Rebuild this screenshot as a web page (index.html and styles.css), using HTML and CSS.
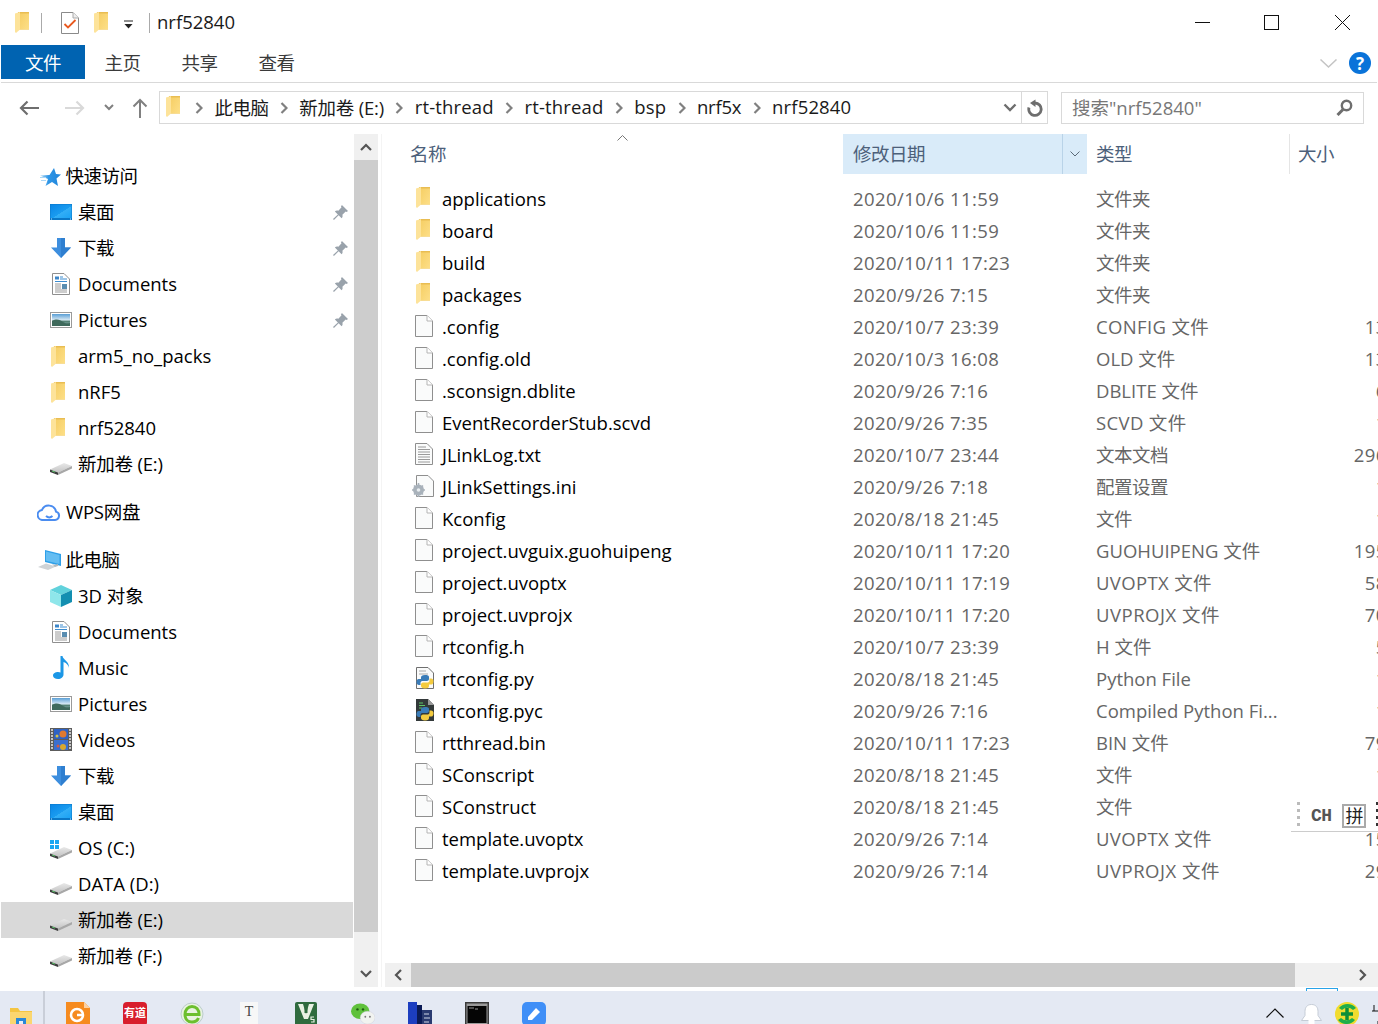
FILE: index.html
```html
<!DOCTYPE html>
<html lang="zh-CN">
<head>
<meta charset="utf-8">
<title>nrf52840</title>
<link rel="stylesheet" href="styles.css">
</head>
<body>
<svg class="defs" width="0" height="0" aria-hidden="true">
  <defs>
    <linearGradient id="g-folder" x1="0" y1="0" x2="1" y2="1"><stop offset="0" stop-color="#f6cf66"/><stop offset="1" stop-color="#fddf88"/></linearGradient>
    <linearGradient id="g-desk" x1="0" y1="0" x2="1" y2="1"><stop offset="0" stop-color="#0a86e6"/><stop offset=".55" stop-color="#1a9cf0"/><stop offset=".56" stop-color="#33aef6"/><stop offset="1" stop-color="#1aa2f4"/></linearGradient>
    <linearGradient id="g-pic" x1="0" y1="0" x2="0" y2="1"><stop offset="0" stop-color="#5a9fd6"/><stop offset=".5" stop-color="#d8e9f4"/><stop offset=".6" stop-color="#4e7d6e"/><stop offset="1" stop-color="#a9c8d0"/></linearGradient>
    <linearGradient id="g-drive" x1="0" y1="0" x2="0" y2="1"><stop offset="0" stop-color="#e8e8e8"/><stop offset="1" stop-color="#c4c4c4"/></linearGradient>
    <linearGradient id="g-star" x1="0" y1="0" x2="1" y2="0"><stop offset="0" stop-color="#b4dcf8"/><stop offset=".4" stop-color="#2f96e6"/><stop offset="1" stop-color="#1f84da"/></linearGradient>

    <symbol id="i-folder" viewBox="0 0 14 21">
      <rect x="3" y="0" width="11" height="17.500" fill="#e9bd52"/>
      <path d="M5 1.500h9v16H5z" fill="url(#g-folder)"/>
      <path d="M0 1.500 5 0v17.500L1 21l-1-1z" fill="#fde39a"/>
    </symbol>
    <symbol id="i-file" viewBox="0 0 18 22">
      <path d="M.5.5h11.500l5.500 5.500v15.500H.5z" fill="#fafbfb" stroke="#8f8f8f"/>
      <path d="M12 .5V6h5.500" fill="#fff" stroke="#b5b5b5"/>
    </symbol>
    <symbol id="i-txt" viewBox="0 0 18 22">
      <path d="M.5.5h11.500l5.500 5.500v15.500H.5z" fill="#fafbfb" stroke="#8f8f8f"/>
      <path d="M3 4h8M3 6.500h12M3 9h12M3 11.500h12M3 14h12M3 16.500h12M3 19h12" stroke="#9a9a9a"/>
    </symbol>
    <symbol id="i-ini" viewBox="0 0 22 22">
      <path d="M4.500.5h11.500l5.500 5.500v15.500h-17z" fill="#fafbfb" stroke="#8f8f8f"/>
      <circle cx="6.500" cy="15" r="5.500" fill="#a9b2bb"/>
      <path d="M6.500 8v14M0 15h13M2 10.500l9 9M11 10.500l-9 9" stroke="#a9b2bb" stroke-width="1.600"/>
      <circle cx="6.500" cy="15" r="1.800" fill="#e8edf0"/>
    </symbol>
    <symbol id="i-py" viewBox="0 0 18 22">
      <path d="M.5.5h11.500l5.500 5.500v15.500H.5z" fill="#fafbfb" stroke="#6f6f6f"/>
      <path d="M3 4h7M3 7h9" stroke="#aaa"/>
      <path d="M9 8c-3 0-4 1-4 2.500V12H2.500C1 12 .5 14 .5 15.500S1.500 18 3 18h1.500v-2c0-1.500 1-2 2.500-2h4c1 0 2-.8 2-2V10c0-1.500-1.500-2-4-2z" fill="#3a7cb8"/>
      <path d="M9 21.500c3 0 4-1 4-2.500v-1.500h2.500c1.500 0 2-2 2-3.500s-1-2.500-2.500-2.500h-1.500v2c0 1.500-1 2-2.500 2H7c-1 0-2 .8-2 2V19c0 1.500 1.500 2.500 4 2.500z" fill="#f4cb3f"/>
    </symbol>
    <symbol id="i-pyc" viewBox="0 0 18 22">
      <path d="M0 0h12l6 6v16H0z" fill="#33393a"/>
      <path d="M12 0v6h6" fill="#9a9a9a"/>
      <path d="M3 4h4M3 6.500h6M3 9h3" stroke="#5fc46a"/>
      <path d="M9 8c-3 0-4 1-4 2.500V12H2.500C1 12 .5 14 .5 15.500S1.500 18 3 18h1.500v-2c0-1.500 1-2 2.500-2h4c1 0 2-.8 2-2V10c0-1.500-1.500-2-4-2z" fill="#3a7cb8"/>
      <path d="M9 21.500c3 0 4-1 4-2.500v-1.500h2.500c1.500 0 2-2 2-3.500s-1-2.500-2.500-2.500h-1.500v2c0 1.500-1 2-2.500 2H7c-1 0-2 .8-2 2V19c0 1.500 1.500 2.500 4 2.500z" fill="#f4cb3f"/>
    </symbol>
    <symbol id="i-desk" viewBox="0 0 22 16">
      <rect width="22" height="16" fill="#0a78c8"/>
      <rect x=".5" y=".5" width="21" height="13.500" fill="url(#g-desk)"/>
      <path d="M1 15h1M20 15h1" stroke="#bfe3fa"/>
    </symbol>
    <symbol id="i-down" viewBox="0 0 20 20">
      <path d="M6 0h8v9.500h6L10 20 0 9.500h6z" fill="#3d8ede"/>
      <path d="M10 0h4v9.500h6L10 20z" fill="#2f7fd0"/>
    </symbol>
    <symbol id="i-doc" viewBox="0 0 18 22">
      <path d="M.5.5h11.500l5.500 5.500v15.500H.5z" fill="#fff" stroke="#8f8f8f"/>
      <path d="M3 3.500h4v3H3z" fill="#3c86c9"/>
      <path d="M8 4h3M8 6h7M3 8.500h12" stroke="#3c8ccf"/>
      <path d="M3 11h6M3 13h6M3 15h6M3 17h12M3 19h12" stroke="#9a9a9a"/>
      <rect x="10" y="11" width="5" height="5" fill="#5a8db0"/>
    </symbol>
    <symbol id="i-pic" viewBox="0 0 22 16">
      <rect x=".5" y=".5" width="21" height="15" fill="#fff" stroke="#9a9a9a"/>
      <rect x="2" y="2" width="18" height="12" fill="url(#g-pic)"/>
      <path d="M2 9c5-3 8-1 11 1s5 1 7 1v3H2z" fill="#3f6a5c"/>
    </symbol>
    <symbol id="i-drive" viewBox="0 0 22 12">
      <path d="M0 6.500 14 0l8 3L8 9.500z" fill="url(#g-drive)"/>
      <path d="M0 6.500 8 9.500V12L0 9z" fill="#3d3d3d"/>
      <path d="M8 9.500 22 3v2.500L8 12z" fill="#a8a8a8"/>
      <path d="M2 8l3 1.100" stroke="#58c268"/>
    </symbol>
    <symbol id="i-star" viewBox="0 0 21 18">
      <path d="M14 0l2 6 5 .5-4.500 4 1.500 7.500-6-4-6.500 4 2.500-7-8-3.500 9.500-.5z" fill="url(#g-star)"/>
      <path d="M0 9.500h6M1 12.500h5" stroke="#a9d6f6"/>
    </symbol>
    <symbol id="i-cloud" viewBox="0 0 24 18">
      <path d="M6.500 17h11.500a4.300 4.300 0 0 0 1-8.400 7.400 7.400 0 0 0-14-1.700A5.100 5.100 0 0 0 6.500 17z" fill="none" stroke="#4a8cf0" stroke-width="2"/>
      <path d="M9 13c2 1.800 4.500 1.800 6.500 0" fill="none" stroke="#4a8cf0" stroke-width="2"/>
    </symbol>
    <symbol id="i-pc" viewBox="0 0 24 21">
      <path d="M7 0l16 4v12L7 12z" fill="#2e9fe8"/>
      <path d="M8 1.500l13.500 3.400v9L8 10.700z" fill="#64bdf2"/>
      <path d="M0 17l8-3.500 10 3L10 20z" fill="#cfd3d6"/>
      <path d="M14 14l3 1 3-1v2l-3 1z" fill="#b5b9bc"/>
    </symbol>
    <symbol id="i-3d" viewBox="0 0 22 22">
      <path d="M11 0l11 5-11 5L0 5z" fill="#61d2dc"/>
      <path d="M0 5l11 5v12L0 17z" fill="#8fe6ea"/>
      <path d="M22 5 11 10v12l11-5z" fill="#138fb1"/>
    </symbol>
    <symbol id="i-music" viewBox="0 0 17 23">
      <path d="M7.500 0h2c.5 4 7 5 6.500 12-.3-2-2-5-5.500-6v12.500c0 2.700-2.500 4.500-5.500 4.500S0 21.500 0 19.500 2.500 16 5 16c1 0 2 .2 2.500.6z" fill="#1c97e6"/>
    </symbol>
    <symbol id="i-video" viewBox="0 0 22 23">
      <rect width="22" height="23" fill="#5c5c5c"/>
      <path d="M1 2h2M1 5h2M1 8h2M1 11h2M1 14h2M1 17h2M1 20h2M19 2h2M19 5h2M19 8h2M19 11h2M19 14h2M19 17h2M19 20h2" stroke="#e8e8e8" stroke-width="1.300"/>
      <rect x="4" y="1" width="14" height="10" fill="#2e62c4"/>
      <rect x="4" y="12" width="14" height="10" fill="#3a6fd0"/>
      <circle cx="13" cy="6" r="3.500" fill="#e0792e"/><circle cx="7" cy="8" r="1.500" fill="#d6c446"/>
      <circle cx="13" cy="19" r="3" fill="#d9a82e"/><circle cx="8" cy="18" r="1.500" fill="#d65a3e"/>
    </symbol>
    <symbol id="i-pin" viewBox="0 0 16 16">
      <path d="M9.500 0 16 6.500l-1.500 1-1-.6L10 10.300c.5 1.500.2 2.700-.8 3.700L6 10.800 1 16l-1-1 5.200-5L2 6.800c1-1 2.200-1.300 3.700-.8L9.100 2.500l-.6-1z" fill="#99a2ab"/>
    </symbol>
    <symbol id="i-chev" viewBox="0 0 8 12">
      <path d="M1.500 1 6.500 6l-5 5" fill="none" stroke="#808080" stroke-width="2.200"/>
    </symbol>
  </defs>
</svg>

<div class="window">
  <header class="titlebar">
    <svg class="ic-folder qa-first"><use href="#i-folder"/></svg>
    <span class="qa-sep"></span>
    <svg class="qa-check" viewBox="0 0 18 22">
      <path d="M.5.5h11.500l5.500 5.500v15.500H.5z" fill="#fff" stroke="#8a8a8a"/>
      <path d="M12 .5V6h5.500" fill="#eee" stroke="#aaa"/>
      <path d="M3.500 12l3.500 3.500 7.500-7.500" fill="none" stroke="#e8591f" stroke-width="1.800"/>
    </svg>
    <svg class="ic-folder qa-folder2"><use href="#i-folder"/></svg>
    <svg class="qa-drop" viewBox="0 0 11 10"><path d="M1 1h9" stroke="#222"/><path d="M1.500 4h8L5.500 8.500z" fill="#222"/></svg>
    <span class="qa-sep sep2"></span>
    <span class="title-text">nrf52840</span>
    <div class="winbtns">
      <svg class="winbtn" viewBox="0 0 15 15"><path d="M0 7.500h15" stroke="#111"/></svg>
      <svg class="winbtn" viewBox="0 0 15 15"><rect x=".5" y=".5" width="14" height="14" fill="none" stroke="#111"/></svg>
      <svg class="winbtn win-close" viewBox="0 0 15 15"><path d="M0 0l15 15M15 0 0 15" stroke="#111"/></svg>
    </div>
  </header>

  <nav class="ribbon">
    <span class="tab tab-file cjk">文件</span>
    <span class="tab tab-first cjk">主页</span>
    <span class="tab cjk">共享</span>
    <span class="tab cjk">查看</span>
    <svg class="rib-chev" viewBox="0 0 17 9"><path d="M.5.5 8.500 8l8-7.500" fill="none" stroke="#c4c4c4" stroke-width="1.500"/></svg>
    <span class="help">?</span>
  </nav>

  <div class="navbar">
    <svg class="nav-arrow back" viewBox="0 0 20 16"><path d="M20 8H2M8.500 1.500 2 8l6.500 6.500" fill="none" stroke="#6e6e6e" stroke-width="2.200"/></svg>
    <svg class="nav-arrow fwd" viewBox="0 0 20 16"><path d="M0 8h18M11.500 1.500 18 8l-6.500 6.500" fill="none" stroke="#d9d9d9" stroke-width="2.200"/></svg>
    <svg class="nav-mini" viewBox="0 0 10 7"><path d="M1 1l4 4 4-4" fill="none" stroke="#808080" stroke-width="2"/></svg>
    <svg class="nav-up" viewBox="0 0 16 20"><path d="M8 20V2M1.500 8.500 8 2l6.500 6.500" fill="none" stroke="#808080" stroke-width="2"/></svg>
    <div class="address">
      <svg class="ic-folder addr-folder"><use href="#i-folder"/></svg>
      <div class="crumbs">
        <svg class="crumb-sep"><use href="#i-chev"/></svg><span class="cjk">此电脑</span>
        <svg class="crumb-sep"><use href="#i-chev"/></svg><span class="mix">新加卷 (E:)</span>
        <svg class="crumb-sep"><use href="#i-chev"/></svg><span>rt-thread</span>
        <svg class="crumb-sep"><use href="#i-chev"/></svg><span>rt-thread</span>
        <svg class="crumb-sep"><use href="#i-chev"/></svg><span>bsp</span>
        <svg class="crumb-sep"><use href="#i-chev"/></svg><span class="mix">nrf5x</span>
        <svg class="crumb-sep"><use href="#i-chev"/></svg><span>nrf52840</span>
      </div>
      <svg class="addr-drop" viewBox="0 0 14 9"><path d="M1.500 1.500 7 7l5.500-5.500" fill="none" stroke="#6e6e6e" stroke-width="2.400"/></svg>
      <div class="addr-refresh">
        <svg class="refresh" viewBox="0 0 17 18"><path d="M9 4a6.200 6.200 0 1 1-6 4.500" fill="none" stroke="#6e6e6e" stroke-width="2.800"/><path d="M9.500 .5v7.500L4 4z" fill="#6e6e6e"/></svg>
      </div>
    </div>
    <div class="search">
      <span class="search-text">搜索"nrf52840"</span>
      <svg class="search-ic" viewBox="0 0 17 17"><circle cx="10.500" cy="6.500" r="4.700" fill="none" stroke="#6e6e6e" stroke-width="2.400"/><path d="M7 10.500 1.500 16" stroke="#6e6e6e" stroke-width="3"/></svg>
    </div>
  </div>

  <main class="content">
    <aside class="tree">
      <section class="tree-group">
        <div class="node lvl1"><svg class="ic ic-star"><use href="#i-star"/></svg><span class="cjk">快速访问</span></div>
        <div class="node"><svg class="ic ic-desk"><use href="#i-desk"/></svg><span class="cjk">桌面</span><svg class="pin"><use href="#i-pin"/></svg></div>
        <div class="node"><svg class="ic ic-down"><use href="#i-down"/></svg><span class="cjk">下载</span><svg class="pin"><use href="#i-pin"/></svg></div>
        <div class="node"><svg class="ic ic-doc"><use href="#i-doc"/></svg><span>Documents</span><svg class="pin"><use href="#i-pin"/></svg></div>
        <div class="node"><svg class="ic ic-pic"><use href="#i-pic"/></svg><span>Pictures</span><svg class="pin"><use href="#i-pin"/></svg></div>
        <div class="node"><svg class="ic ic-folder"><use href="#i-folder"/></svg><span>arm5_no_packs</span></div>
        <div class="node"><svg class="ic ic-folder"><use href="#i-folder"/></svg><span>nRF5</span></div>
        <div class="node"><svg class="ic ic-folder"><use href="#i-folder"/></svg><span>nrf52840</span></div>
        <div class="node"><svg class="ic ic-drive"><use href="#i-drive"/></svg><span class="mix">新加卷 (E:)</span></div>
      </section>
      <section class="tree-group">
        <div class="node lvl1"><svg class="ic ic-cloud"><use href="#i-cloud"/></svg><span class="mix">WPS网盘</span></div>
      </section>
      <section class="tree-group">
        <div class="node lvl1"><svg class="ic ic-pc"><use href="#i-pc"/></svg><span class="cjk">此电脑</span></div>
        <div class="node"><svg class="ic ic-3d"><use href="#i-3d"/></svg><span>3D 对象</span></div>
        <div class="node"><svg class="ic ic-doc"><use href="#i-doc"/></svg><span>Documents</span></div>
        <div class="node"><svg class="ic ic-music"><use href="#i-music"/></svg><span>Music</span></div>
        <div class="node"><svg class="ic ic-pic"><use href="#i-pic"/></svg><span>Pictures</span></div>
        <div class="node"><svg class="ic ic-video"><use href="#i-video"/></svg><span>Videos</span></div>
        <div class="node"><svg class="ic ic-down"><use href="#i-down"/></svg><span class="cjk">下载</span></div>
        <div class="node"><svg class="ic ic-desk"><use href="#i-desk"/></svg><span class="cjk">桌面</span></div>
        <div class="node"><svg class="ic ic-drive os"><use href="#i-drive"/></svg><i class="win-logo"></i><span>OS (C:)</span></div>
        <div class="node"><svg class="ic ic-drive"><use href="#i-drive"/></svg><span>DATA (D:)</span></div>
        <div class="node selected"><svg class="ic ic-drive"><use href="#i-drive"/></svg><span class="mix">新加卷 (E:)</span></div>
        <div class="node"><svg class="ic ic-drive"><use href="#i-drive"/></svg><span class="mix">新加卷 (F:)</span></div>
      </section>
    </aside>

    <div class="vscroll">
      <button class="sb-btn"><svg viewBox="0 0 12 8"><path d="M1 7l5-5 5 5" fill="none" stroke="#555" stroke-width="2.200"/></svg></button>
      <div class="vtrack"><div class="vthumb"></div></div>
      <button class="sb-btn"><svg viewBox="0 0 12 8"><path d="M1 1l5 5 5-5" fill="none" stroke="#555" stroke-width="2.200"/></svg></button>
    </div>

    <section class="files">
      <div class="fhead">
        <div class="hcell hname"><span class="cjk">名称</span><svg class="sort" viewBox="0 0 11 6"><path d="M.5 5.500 5.500.5l5 5" fill="none" stroke="#777"/></svg></div>
        <div class="hcell hdate"><span class="cjk">修改日期</span><span class="hdrop"><svg viewBox="0 0 10 6"><path d="M.5.500 5 5 9.500.5" fill="none" stroke="#5a6a78"/></svg></span></div>
        <div class="hcell htype"><span class="cjk">类型</span></div>
        <div class="hcell hsize"><span class="cjk">大小</span></div>
      </div>
      <div class="flist">
        <div class="frow"><span class="fname"><svg class="fic f-folder"><use href="#i-folder"/></svg>applications</span><span class="fdate">2020/10/6 11:59</span><span class="ftype cjk">文件夹</span><span class="fsize"></span></div>
        <div class="frow"><span class="fname"><svg class="fic f-folder"><use href="#i-folder"/></svg>board</span><span class="fdate">2020/10/6 11:59</span><span class="ftype cjk">文件夹</span><span class="fsize"></span></div>
        <div class="frow"><span class="fname"><svg class="fic f-folder"><use href="#i-folder"/></svg>build</span><span class="fdate">2020/10/11 17:23</span><span class="ftype cjk">文件夹</span><span class="fsize"></span></div>
        <div class="frow"><span class="fname"><svg class="fic f-folder"><use href="#i-folder"/></svg>packages</span><span class="fdate">2020/9/26 7:15</span><span class="ftype cjk">文件夹</span><span class="fsize"></span></div>
        <div class="frow"><span class="fname"><svg class="fic"><use href="#i-file"/></svg>.config</span><span class="fdate">2020/10/7 23:39</span><span class="ftype lat">CONFIG 文件</span><span class="fsize">13 KB</span></div>
        <div class="frow"><span class="fname"><svg class="fic"><use href="#i-file"/></svg>.config.old</span><span class="fdate">2020/10/3 16:08</span><span class="ftype">OLD 文件</span><span class="fsize">13 KB</span></div>
        <div class="frow"><span class="fname"><svg class="fic"><use href="#i-file"/></svg>.sconsign.dblite</span><span class="fdate">2020/9/26 7:16</span><span class="ftype">DBLITE 文件</span><span class="fsize">6 KB</span></div>
        <div class="frow"><span class="fname"><svg class="fic"><use href="#i-file"/></svg>EventRecorderStub.scvd</span><span class="fdate">2020/9/26 7:35</span><span class="ftype lat">SCVD 文件</span><span class="fsize">1 KB</span></div>
        <div class="frow"><span class="fname"><svg class="fic"><use href="#i-txt"/></svg>JLinkLog.txt</span><span class="fdate">2020/10/7 23:44</span><span class="ftype cjk">文本文档</span><span class="fsize">296 KB</span></div>
        <div class="frow"><span class="fname"><svg class="fic f-ini"><use href="#i-ini"/></svg>JLinkSettings.ini</span><span class="fdate">2020/9/26 7:18</span><span class="ftype cjk">配置设置</span><span class="fsize">1 KB</span></div>
        <div class="frow"><span class="fname"><svg class="fic"><use href="#i-file"/></svg>Kconfig</span><span class="fdate">2020/8/18 21:45</span><span class="ftype cjk">文件</span><span class="fsize">1 KB</span></div>
        <div class="frow"><span class="fname"><svg class="fic"><use href="#i-file"/></svg>project.uvguix.guohuipeng</span><span class="fdate">2020/10/11 17:20</span><span class="ftype">GUOHUIPENG 文件</span><span class="fsize">195 KB</span></div>
        <div class="frow"><span class="fname"><svg class="fic"><use href="#i-file"/></svg>project.uvoptx</span><span class="fdate">2020/10/11 17:19</span><span class="ftype lat">UVOPTX 文件</span><span class="fsize">58 KB</span></div>
        <div class="frow"><span class="fname"><svg class="fic"><use href="#i-file"/></svg>project.uvprojx</span><span class="fdate">2020/10/11 17:20</span><span class="ftype lat2">UVPROJX 文件</span><span class="fsize">70 KB</span></div>
        <div class="frow"><span class="fname"><svg class="fic"><use href="#i-file"/></svg>rtconfig.h</span><span class="fdate">2020/10/7 23:39</span><span class="ftype">H 文件</span><span class="fsize">5 KB</span></div>
        <div class="frow"><span class="fname"><svg class="fic f-py"><use href="#i-py"/></svg>rtconfig.py</span><span class="fdate">2020/8/18 21:45</span><span class="ftype">Python File</span><span class="fsize">1 KB</span></div>
        <div class="frow"><span class="fname"><svg class="fic f-py"><use href="#i-pyc"/></svg>rtconfig.pyc</span><span class="fdate">2020/9/26 7:16</span><span class="ftype">Compiled Python Fi...</span><span class="fsize">1 KB</span></div>
        <div class="frow"><span class="fname"><svg class="fic"><use href="#i-file"/></svg>rtthread.bin</span><span class="fdate">2020/10/11 17:23</span><span class="ftype">BIN 文件</span><span class="fsize">79 KB</span></div>
        <div class="frow"><span class="fname"><svg class="fic"><use href="#i-file"/></svg>SConscript</span><span class="fdate">2020/8/18 21:45</span><span class="ftype cjk">文件</span><span class="fsize">1 KB</span></div>
        <div class="frow"><span class="fname"><svg class="fic"><use href="#i-file"/></svg>SConstruct</span><span class="fdate">2020/8/18 21:45</span><span class="ftype cjk">文件</span><span class="fsize">2 KB</span></div>
        <div class="frow"><span class="fname"><svg class="fic"><use href="#i-file"/></svg>template.uvoptx</span><span class="fdate">2020/9/26 7:14</span><span class="ftype lat">UVOPTX 文件</span><span class="fsize">15 KB</span></div>
        <div class="frow"><span class="fname"><svg class="fic"><use href="#i-file"/></svg>template.uvprojx</span><span class="fdate">2020/9/26 7:14</span><span class="ftype lat2">UVPROJX 文件</span><span class="fsize">29 KB</span></div>
      </div>
      <div class="hscroll">
        <button class="hb-btn"><svg viewBox="0 0 8 12"><path d="M7 1 2 6l5 5" fill="none" stroke="#555" stroke-width="2.200"/></svg></button>
        <div class="hthumb"></div>
        <button class="hb-btn"><svg viewBox="0 0 8 12"><path d="M1 1l5 5-5 5" fill="none" stroke="#555" stroke-width="2.200"/></svg></button>
      </div>
    </section>
  </main>

  <footer class="taskbar">
    <svg class="tk tk-explorer" viewBox="0 0 22 22"><path d="M0 3h8l2 3h12v16H0z" fill="#f4c542"/><rect y="7" width="22" height="15" fill="#fad670"/><rect x="6" y="13" width="10" height="9" fill="#2a88d8"/><rect x="9" y="16" width="4" height="6" fill="#e8eef5"/></svg>
    <span class="tk-sep"></span>
    <svg class="tk tk-foxit" viewBox="0 0 24 24"><path d="M0 0h18l6 6v18H0z" fill="#f68b1f"/><path d="M18 0v6h6" fill="#fcd0a0"/><circle cx="11" cy="13" r="6" fill="none" stroke="#fff" stroke-width="2.500"/><path d="M11 13h6" stroke="#fff" stroke-width="2.500"/></svg>
    <span class="tk tk-youdao">有道</span>
    <svg class="tk tk-ie" viewBox="0 0 24 24"><circle cx="12" cy="12" r="11" fill="#e8f3e0" stroke="#bcc" stroke-width="1"/><path d="M5 12.500h14c0-5-3-8-7-8s-7 3.500-7 8 3 7.500 7 7.500c3 0 5.500-1.500 6.500-4" fill="none" stroke="#6cbf2e" stroke-width="3"/></svg>
    <span class="tk tk-t">T</span>
    <svg class="tk tk-vs" viewBox="0 0 22 24"><rect width="22" height="24" rx="2" fill="#2f6b3e"/><path d="M3 2h5l3 10 3-10h5l-6 15h-4z" fill="#e9f1e3"/><path d="M9.500 2h3v9h-3z" fill="#2f6b3e"/><path d="M19 15h-3v2.500h3V20h-3" fill="none" stroke="#e9f1e3" stroke-width="1.200"/></svg>
    <svg class="tk tk-wx" viewBox="0 0 26 24"><ellipse cx="10" cy="9" rx="10" ry="8.500" fill="#5fc13c"/><ellipse cx="18" cy="16" rx="8" ry="7" fill="#f1f3f0" stroke="#ccd" stroke-width=".5"/><circle cx="7" cy="7" r="1.300" fill="#1d5c10"/><circle cx="13" cy="7" r="1.300" fill="#1d5c10"/><circle cx="15.500" cy="15" r="1" fill="#777"/><circle cx="20.500" cy="15" r="1" fill="#777"/></svg>
    <svg class="tk tk-keil" viewBox="0 0 24 24"><rect width="9" height="24" fill="#1c3ec0"/><rect x="9" y="3" width="5" height="21" fill="#0a1a55"/><rect x="14" y="8" width="10" height="16" fill="#2a3a70"/><path d="M16 12h5M16 16h6M16 20h5" stroke="#cfd6e6"/></svg>
    <svg class="tk tk-cmd" viewBox="0 0 24 24"><rect width="24" height="24" fill="#3a3a3a"/><rect x="1.500" y="1.500" width="21" height="21" fill="#9a9a9a"/><rect x="2.500" y="4" width="19" height="17" fill="#050505"/><path d="M4 6h5M10 7h3" stroke="#999"/></svg>
    <svg class="tk tk-note" viewBox="0 0 24 24"><rect width="24" height="24" rx="5" fill="#3f8ff7"/><path d="M6 15 14 6l4 4-8 8H6z" fill="#fff"/></svg>
    <span class="tk-gap"></span>
    <svg class="tray-up" viewBox="0 0 18 10"><path d="M.5 9.500 9 1l8.500 8.500" fill="none" stroke="#111" stroke-width="1.200"/></svg>
    <svg class="tray-bell" viewBox="0 0 21 20"><path d="M10.500 .5c4.500 0 6.500 3 6.500 7v4l3.500 5H.5L4 11.500v-4c0-4 2-7 6.500-7z" fill="#fff" stroke="#c5ccd6"/><rect x="7.500" y="16" width="6" height="4" fill="#fff"/></svg>
    <svg class="tray-plus" viewBox="0 0 24 24"><circle cx="12" cy="12" r="12" fill="#f1dc2f"/><path d="M4 6a11 11 0 0 1 17 0l-3 2a8 8 0 0 0-11 0zM20 18a11 11 0 0 1-17 0l3-2a8 8 0 0 0 11 0z" fill="#1fae4b"/><path d="M12 6v12M6 12h12" stroke="#0f8e38" stroke-width="3.500"/></svg>
    <svg class="tray-plug" viewBox="0 0 10 22"><path d="M2 0v6M8 0v6M0 6h10v6a4 4 0 0 1-4 4v6" fill="none" stroke="#111"/></svg>
  </footer>
</div>

<div class="ime">
  <span class="ime-grip"></span>
  <span class="ime-ch">CH</span>
  <span class="ime-py">拼</span>
  <span class="ime-grip end"></span>
</div>
<span class="active-tab"></span>
</body>
</html>
```

FILE: styles.css
```css
* { box-sizing: border-box; }
html, body { margin: 0; padding: 0; }
body {
  width: 1378px;
  height: 1024px;
  overflow: hidden;
  position: relative;
  background: #fff;
  color: #000;
  font-family: "Open Sans", "Noto Sans CJK SC", sans-serif;
  font-size: 18.5px;
}
.defs { position: absolute; }
.window { display: flex; flex-direction: column; width: 1378px; height: 1024px; overflow: hidden; }
svg { display: block; flex: none; }
.cjk { letter-spacing: -.5px; }
.mix { letter-spacing: -.2px; }
.lat { letter-spacing: .35px; }
.lat2 { letter-spacing: .5px; }

/* title bar */
.titlebar { display: flex; align-items: center; height: 45px; flex: none; }
.ic-folder { width: 14px; height: 21px; }
.qa-first { margin-left: 15px; }
.qa-sep { width: 1px; height: 20px; background: #aaa; margin-left: 12px; }
.sep2 { margin-left: 15px; }
.qa-check { width: 18px; height: 22px; margin-left: 19px; }
.qa-folder2 { margin-left: 15px; }
.qa-drop { width: 11px; height: 10px; margin-left: 15px; margin-top: 5px; }
.title-text { margin: -2px 0 0 7px; color: #1a1a1a; }
.winbtns { display: flex; margin-left: auto; gap: 54px; padding-right: 28px; }
.winbtn { width: 15px; height: 15px; }
.win-close { margin-left: 2px; }

/* ribbon */
.ribbon { display: flex; align-items: stretch; height: 38px; flex: none; margin: 0 1px; border-bottom: 1px solid #d9d9d9; padding-bottom: 3px; }
.tab { width: 77px; display: flex; align-items: center; justify-content: center; color: #3a3a3a; }
.tab-file { width: 84px; background: #0063b1; color: #fff; }
.tab-first { margin-left: -1px; }
.rib-chev { width: 17px; height: 9px; align-self: center; margin: 2px 12px 0 auto; }
.help { width: 22px; height: 22px; border-radius: 50%; background: #0a73d9; color: #fff; align-self: center; display: flex; align-items: center; justify-content: center; font-size: 17px; font-weight: 700; margin: 2px 6px 0 0; }

/* nav bar */
.navbar { display: flex; align-items: center; height: 33px; margin-top: 8px; flex: none; }
.nav-arrow { width: 20px; height: 16px; }
.back { margin-left: 19px; }
.fwd { margin-left: 26px; }
.nav-mini { width: 10px; height: 7px; margin-left: 19px; }
.nav-up { width: 16px; height: 20px; margin-left: 18px; }
.address { display: flex; align-items: center; width: 889px; height: 33px; margin-left: 11px; border: 1px solid #d9d9d9; }
.addr-folder { margin-left: 6px; margin-top: -3px; }
.crumbs { display: flex; align-items: center; color: #1a1a1a; letter-spacing: .15px; margin-top: -2px; }
.crumb-sep { width: 8px; height: 12px; margin: 2px 11.4px 0; }
.crumbs .crumb-sep:first-child { margin-left: 15px; }
.addr-drop { width: 14px; height: 9px; margin-left: auto; margin-right: 4px; }
.addr-refresh { width: 26px; height: 100%; border-left: 1px solid #d9d9d9; display: flex; align-items: center; justify-content: center; }
.refresh { width: 17px; height: 18px; }
.search { display: flex; align-items: center; justify-content: space-between; width: 303px; height: 32px; margin-left: 13px; border: 1px solid #d9d9d9; padding: 0 10px; color: #777; }
.search-text { margin-top: -2px; }
.search-ic { width: 17px; height: 17px; }

/* content */
.content { display: flex; height: 853px; margin-top: 10px; flex: none; }

.tree { width: 352px; margin-left: 1px; padding-top: 24px; flex: none; }
.tree-group { margin-bottom: 12px; }
.node { display: flex; align-items: center; height: 36px; position: relative; padding: 0 0 2px 77px; color: #000; }
.node.lvl1 { padding-left: 65px; }
.node.lvl1 .cjk { margin-left: -.5px; }
.node.selected { background: #d9d9d9; }
.node .ic { position: absolute; }
.ic-folder.ic { left: 50px; top: 8px; }
.ic-star { width: 21px; height: 18px; left: 39px; top: 10px; }
.ic-desk { width: 22px; height: 16px; left: 49px; top: 10px; }
.ic-down { width: 20px; height: 20px; left: 50px; top: 8px; }
.ic-doc { width: 18px; height: 22px; left: 51px; top: 7px; }
.ic-pic { width: 22px; height: 16px; left: 49px; top: 10px; }
.ic-drive { width: 22px; height: 12px; left: 49px; top: 17px; }
.ic-cloud { width: 24px; height: 18px; left: 36px; top: 9px; }
.ic-pc { width: 24px; height: 21px; left: 37px; top: 8px; }
.ic-3d { width: 22px; height: 22px; left: 49px; top: 7px; }
.ic-music { width: 17px; height: 23px; left: 52px; top: 6px; }
.ic-video { width: 22px; height: 23px; left: 49px; top: 6px; }
.win-logo { position: absolute; left: 49px; top: 10px; width: 9px; height: 9px; background:
  linear-gradient(#19a7f2, #19a7f2) 0 0 / 4px 4px no-repeat,
  linear-gradient(#19a7f2, #19a7f2) 5px 0 / 4px 4px no-repeat,
  linear-gradient(#19a7f2, #19a7f2) 0 5px / 4px 4px no-repeat,
  linear-gradient(#19a7f2, #19a7f2) 5px 5px / 4px 4px no-repeat; }
.pin { position: absolute; right: 5px; top: 11px; width: 15px; height: 15px; }

/* scrollbars */
.vscroll { width: 24px; margin-left: 1px; display: flex; flex-direction: column; flex: none; background: #f0f0f0; box-shadow: 3px 0 0 #fff, 4px 0 0 #f4f4f4; }
.sb-btn, .hb-btn { border: 0; padding: 0; background: transparent; display: flex; align-items: center; justify-content: center; flex: none; }
.sb-btn { height: 26px; }
.sb-btn svg { width: 12px; height: 8px; }
.vtrack { flex: 1; }
.vthumb { height: 772px; background: #cdcdcd; }

.files { position: relative; width: 993px; margin-left: 7px; flex: none; display: flex; flex-direction: column; overflow: hidden; }
.fhead { display: grid; grid-template-columns: 458px 244px 202px 89px; height: 40px; flex: none; color: #4c607a; }
.hcell { display: flex; align-items: center; position: relative; padding-bottom: 2px; }
.hname { padding-left: 25px; }
.sort { position: absolute; left: 232px; top: 1px; width: 11px; height: 6px; }
.hdate { background: #d9ebf9; padding-left: 10px; }
.hdrop { position: absolute; right: 0; top: 0; width: 25px; height: 100%; border-left: 1px solid #b9d3e8; display: flex; align-items: center; justify-content: center; }
.hdrop svg { width: 10px; height: 6px; }
.htype { padding-left: 9px; }
.hsize { padding-left: 8px; border-left: 1px solid #e5e5e5; }

.flist { flex: 1; padding-top: 8px; }
.frow { display: grid; grid-template-columns: 458px 243px 203px 127px; height: 32px; align-items: center; width: 1031px; }
.fname { display: flex; align-items: center; padding-left: 57px; position: relative; color: #000; }
.fic { position: absolute; left: 30px; top: 50%; margin-top: -11px; width: 18px; height: 22px; }
.f-folder { width: 14px; height: 21px; left: 31px; }
.f-ini { left: 27px; width: 22px; }
.f-py { left: 31px; }
.fdate, .ftype, .fsize { color: #666; }
.fdate { padding-left: 10px; letter-spacing: .45px; }
.ftype { padding-left: 10px; white-space: nowrap; }
.fsize { text-align: right; white-space: nowrap; letter-spacing: .4px; }

.hscroll { display: flex; height: 24px; flex: none; background: #f0f0f0; }
.hb-btn { width: 26px; }
.hb-btn svg { width: 8px; height: 12px; }
.hthumb { width: 884px; background: #cbcbcb; }
.hb-btn:last-child { margin-left: auto; margin-right: 2px; }

/* taskbar */
.taskbar { display: flex; align-items: flex-start; margin-top: 4px; height: 33px; flex: none; background: #e4e9f3; overflow: hidden; position: relative; }
.tk { width: 24px; height: 24px; margin-top: 11px; flex: none; }
.tk-explorer { width: 22px; height: 22px; margin-left: 10px; margin-top: 14px; }
.tk-sep { width: 2px; height: 33px; background: #c9ced8; margin-left: 11px; flex: none; }
.tk-foxit { margin-left: 21px; }
.tk-youdao { margin-left: 33px; background: #d81e2c; color: #fff; font-size: 11px; font-weight: 700; border-radius: 4px; display: flex; align-items: flex-start; justify-content: center; padding-top: 5px; white-space: nowrap; line-height: 1; overflow: hidden; }
.tk-ie { margin-left: 33px; }
.tk-t { margin-left: 36px; width: 18px; background: #f7f7f7; color: #444; font-family: "Liberation Serif", serif; font-size: 14px; display: flex; justify-content: center; padding-top: 3px; line-height: 1; }
.tk-vs { margin-left: 37px; width: 22px; }
.tk-wx { margin-left: 34px; }
.tk-keil { margin-left: 33px; }
.tk-cmd { margin-left: 33px; }
.tk-note { margin-left: 33px; }
.tk-gap { flex: 1; }
.tray-up { width: 18px; height: 10px; margin-top: 17px; margin-right: 17px; }
.tray-bell { width: 21px; height: 20px; margin-top: 13px; margin-right: 13px; }
.tray-plus { width: 24px; height: 24px; margin-top: 11px; margin-right: 13px; }
.tray-plug { width: 10px; height: 22px; margin-top: 14px; margin-right: -4px; }

/* floating IME bar and active-window marker */
.ime { position: absolute; left: 1291px; top: 800px; width: 87px; height: 32px; background: #fff; border-bottom: 1px solid #ccc; display: flex; align-items: center; }
.ime-grip { width: 3px; height: 28px; margin-left: 6px; background: repeating-linear-gradient(#bbb 0 3px, transparent 3px 7px); flex: none; }
.ime-grip.end { margin-left: 10px; background: repeating-linear-gradient(#333 0 3px, transparent 3px 7px); }
.ime-ch { font-family: "Liberation Mono", monospace; font-size: 18px; font-weight: 700; color: #555; margin-left: 11px; width: 21px; white-space: nowrap; letter-spacing: -.6px; }
.ime-py { width: 24px; height: 24px; margin-left: 11px; border: 2px solid #aaa; font-size: 18px; color: #222; display: flex; align-items: center; justify-content: center; line-height: 1; flex: none; }
.active-tab { position: absolute; left: 1306px; top: 988px; width: 32px; height: 3px; border: 1px solid #29a3e8; border-bottom: 0; background: #fff; }
```
